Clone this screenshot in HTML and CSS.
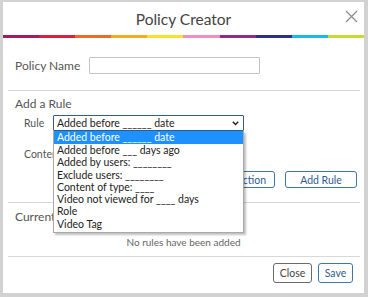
FILE: index.html
```html
<!DOCTYPE html>
<html>
<head>
<meta charset="utf-8">
<link rel="stylesheet" href="styles.css">
</head>
<body>
<div class="modal">
  <div class="header">
    <div class="title">Policy Creator</div>
    <svg class="close" width="13" height="13" viewBox="0 0 13 13"><path d="M1 1L12 12M12 1L1 12" stroke="#8a8a8a" stroke-width="1.2" fill="none"/></svg>
  </div>
  <div class="rainbow">
    <span class="c1"></span><span class="c2"></span><span class="c3"></span><span class="c4"></span><span class="c5"></span><span class="c6"></span><span class="c7"></span><span class="c8"></span><span class="c9"></span><span class="c10"></span>
  </div>
  <div class="section name-section">
    <div class="row">
      <label class="lbl">Policy Name</label>
      <div class="input"></div>
    </div>
  </div>
  <div class="rule-line"></div>
  <div class="section add-section">
    <div class="heading">Add a Rule</div>
    <div class="row rule-row">
      <label class="sub-lbl">Rule</label>
      <div class="select-wrap">
        <div class="select">
          <span>Added before ______ date</span>
          <svg class="chev" width="7" height="5" viewBox="0 0 7 5"><path d="M0.8 0.8L3.5 3.6L6.2 0.8" stroke="#222" stroke-width="1.4" fill="none"/></svg>
        </div>
        <ul class="dropdown">
          <li class="active">Added before ______ date</li>
          <li>Added before ___ days ago</li>
          <li>Added by users: ________</li>
          <li>Exclude users: ________</li>
          <li>Content of type: ____</li>
          <li>Video not viewed for ____ days</li>
          <li>Role</li>
          <li>Video Tag</li>
        </ul>
      </div>
    </div>
    <div class="row content-row">
      <label class="sub-lbl clip">Content Type</label>
    </div>
    <div class="btn-row">
      <button class="btn blue wide"><span>Add Restriction</span></button>
      <button class="btn blue addrule">Add Rule</button>
    </div>
  </div>
  <div class="rule-line"></div>
  <div class="section current-section">
    <div class="heading clip-h">Current Rules</div>
    <div class="empty">No rules have been added</div>
  </div>
  <div class="rule-line"></div>
  <div class="footer">
    <button class="btn gray">Close</button>
    <button class="btn blue">Save</button>
  </div>
</div>
</body>
</html>
```
FILE: styles.css
```css
html, body {
  margin: 0;
  padding: 0;
}
body {
  background: #d2d2d2;
  font-family: "Lato", "Open Sans", sans-serif;
  width: 368px;
  height: 297px;
  overflow: hidden;
}
.modal {
  position: relative;
  background: #fff;
  margin: 2px 4px 0 3px;
  height: 291px;
}
.header {
  position: relative;
  height: 33px;
  display: flex;
  align-items: center;
  justify-content: center;
}
.title {
  font-size: 15.5px;
  color: #444;
  margin-top: 1px;
}
.close {
  position: absolute;
  right: 6px;
  top: 8px;
}
.rainbow {
  display: flex;
  height: 3px;
}
.rainbow span { flex: 1; }
.c1 { background: #a31c5c; }
.c2 { background: #d6213f; }
.c3 { background: #ee6a2c; }
.c4 { background: #f6a91c; }
.c5 { background: #f4e22e; }
.c6 { background: #ef8fbd; }
.c7 { background: #8b2d8c; }
.c8 { background: #2a3088; }
.c9 { background: #1db7e8; }
.c10 { background: #c6da2f; }

.section {
  padding-left: 12px;
  padding-right: 5px;
}
.row {
  display: flex;
  align-items: center;
}
.name-section {
  padding-top: 19px;
  padding-bottom: 16px;
}
.lbl {
  width: 74px;
  font-size: 12px;
  color: #555;
}
.input {
  width: 169px;
  height: 15px;
  border: 1px solid #c4c4c4;
  border-radius: 1px;
}
.rule-line {
  height: 1px;
  background: #d8d8d8;
  margin: 0 4px 0 5px;
}
.add-section {
  padding-top: 5px;
  height: 111px;
  box-sizing: border-box;
}
.heading {
  font-size: 12px;
  color: #555;
  line-height: 16px;
}
.clip-h {
  width: 38px;
  overflow: hidden;
  white-space: nowrap;
}
.rule-row {
  margin-top: 3px;
  padding-left: 9px;
}
.sub-lbl {
  width: 29px;
  font-size: 10.5px;
  color: #555;
}
.sub-lbl.clip {
  width: 29px;
  overflow: hidden;
  white-space: nowrap;
}
.select-wrap {
  position: relative;
}
.select {
  height: 14px;
  border: 1px solid #2f5c88;
  border-radius: 1px;
  display: flex;
  align-items: center;
  justify-content: space-between;
  padding: 0 0 0 3px;
  width: 186px;
  font-size: 10.5px;
  color: #222;
}
.chev {
  margin-right: 4px;
  margin-top: 1px;
}
.dropdown {
  position: absolute;
  left: 0;
  top: 16px;
  width: 189px;
  margin: 0;
  padding: 0 0 2px 0;
  list-style: none;
  background: #fff;
  border: 1px solid #a9a9a9;
  border-top: none;
  box-shadow: 2px 2px 2px rgba(0,0,0,0.25);
  z-index: 5;
}
.dropdown li {
  font-size: 10.5px;
  line-height: 12.3px;
  height: 12.3px;
  color: #222;
  padding-left: 3px;
  white-space: nowrap;
}
.dropdown li.active {
  background: #1e90ff;
  color: #fff;
  height: 13px;
  line-height: 13px;
}
.content-row {
  padding-left: 9px;
  margin-top: 17px;
}
.btn-row {
  display: flex;
  justify-content: flex-end;
  gap: 10px;
  margin-top: 11px;
  padding-right: 2px;
}
.btn {
  font-family: "Lato", "Open Sans", sans-serif;
  font-size: 10.5px;
  background: #fff;
  border-radius: 3px;
  height: 17px;
  padding: 0;
  line-height: 14px;
}
.btn.blue {
  border: 1px solid #3b76ad;
  color: #2f5d8c;
}
.btn.gray {
  border: 1px solid #6a6a6a;
  color: #444;
}
.wide {
  width: 86px;
  text-align: right;
  padding-right: 8px;
  overflow: hidden;
  white-space: nowrap;
}
.addrule { width: 72px; }
.current-section {
  padding-top: 6px;
  height: 53px;
  box-sizing: border-box;
}
.empty {
  text-align: center;
  font-size: 10px;
  color: #666;
  margin-top: 11px;
  padding-right: 7px;
}
.footer {
  display: flex;
  justify-content: flex-end;
  gap: 6px;
  padding: 6px 11px 0 0;
}
.footer .btn {
  height: 20px;
  width: 39px;
}
.footer .btn.blue { width: 35px; }
```
